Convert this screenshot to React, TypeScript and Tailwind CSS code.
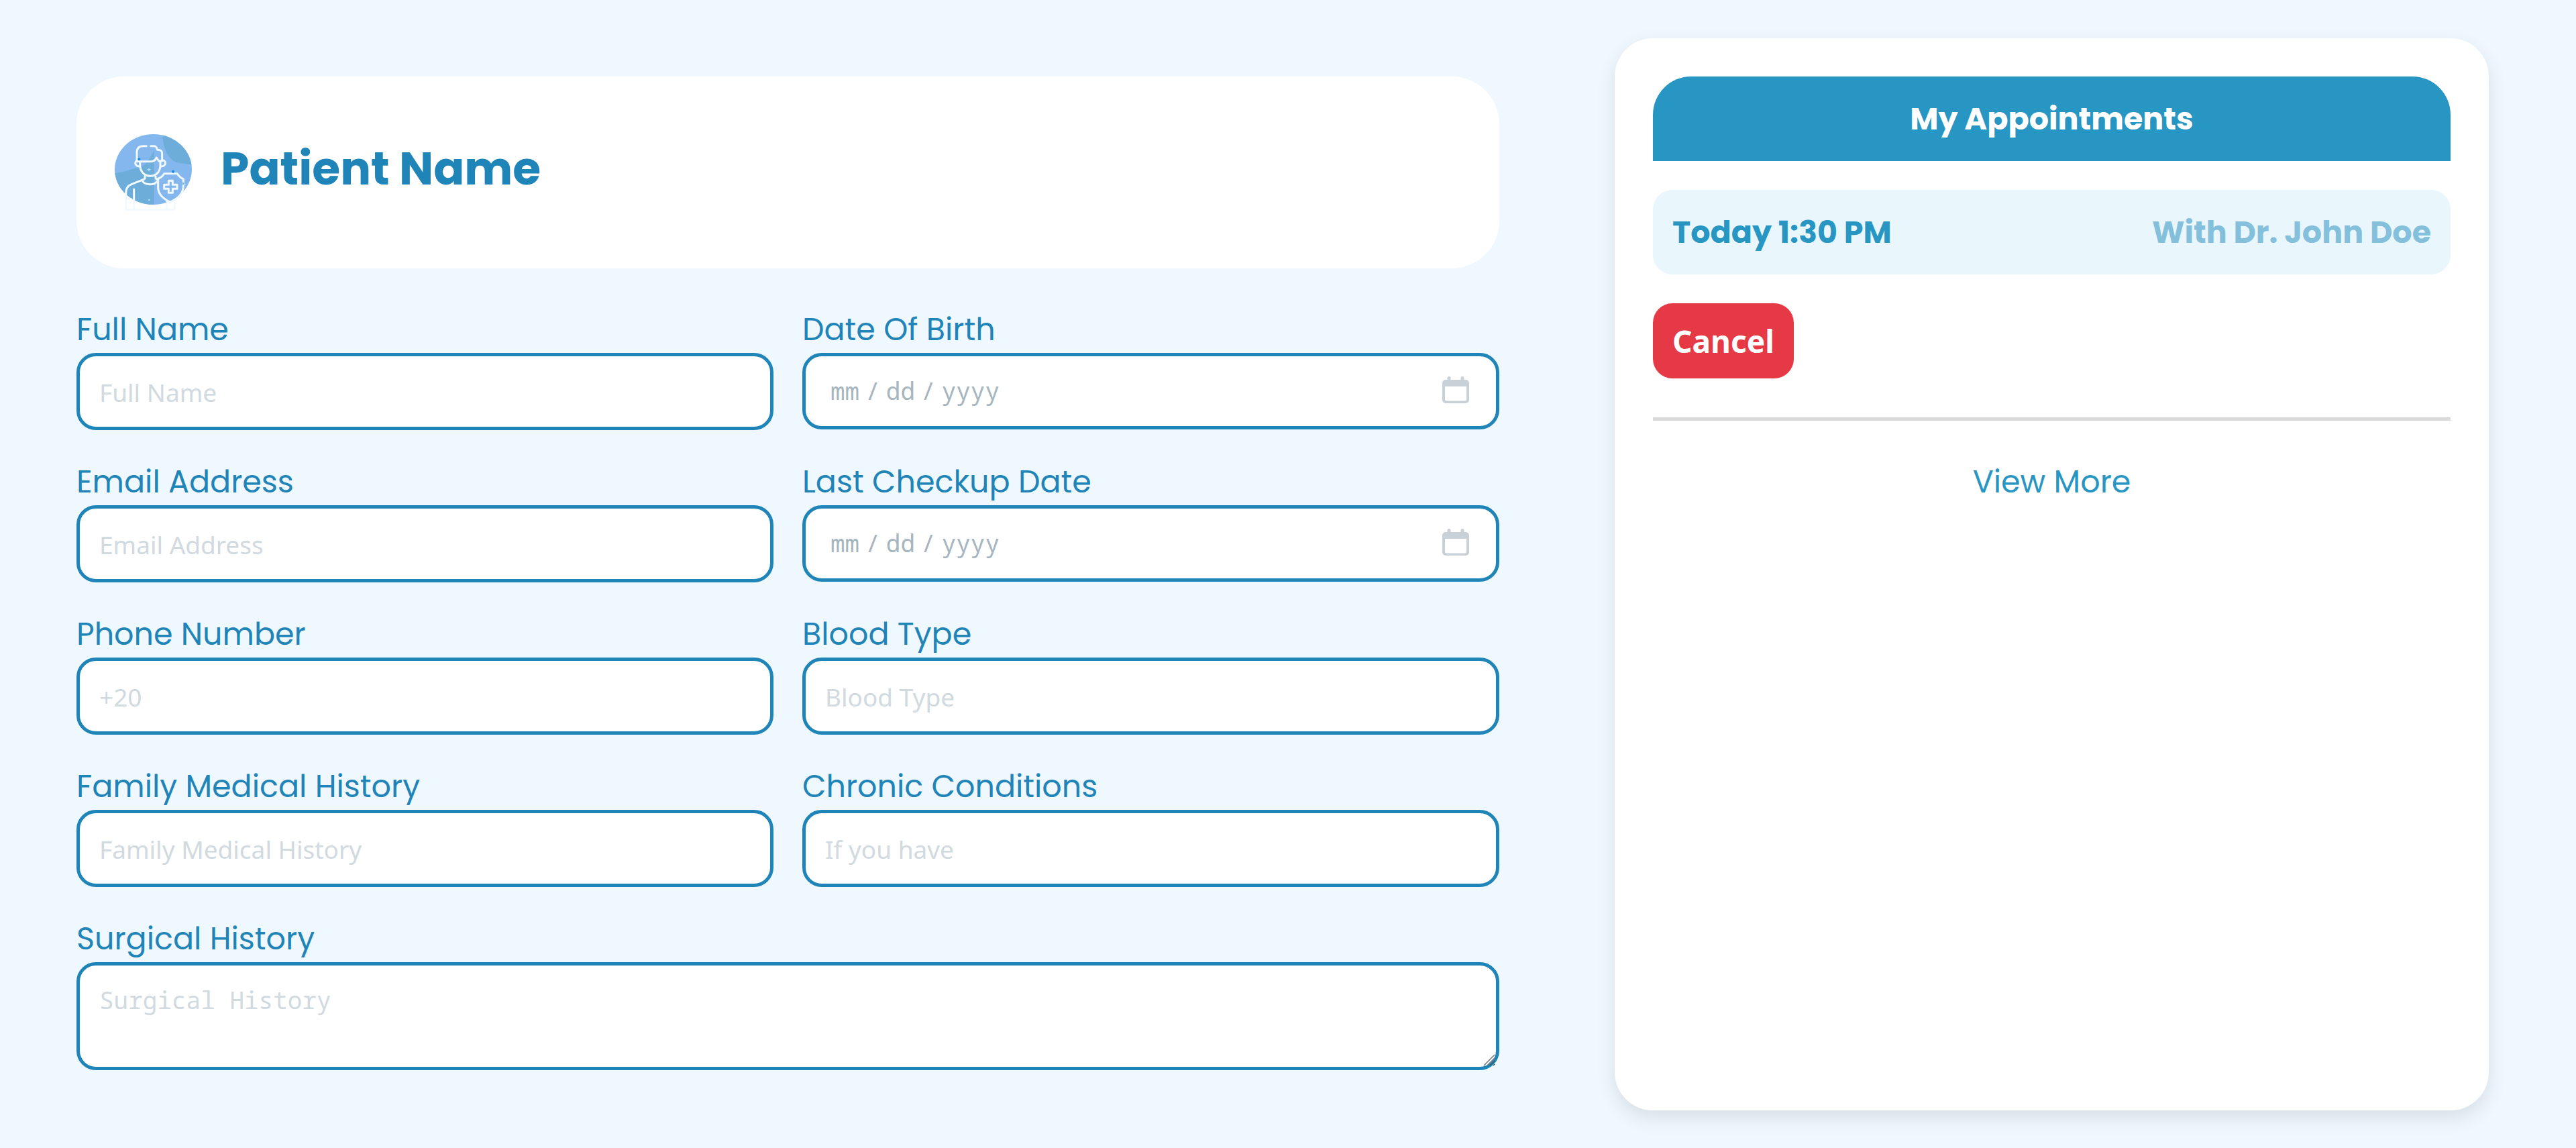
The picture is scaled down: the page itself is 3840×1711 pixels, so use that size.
import type { ReactNode } from "react";

const control =
  "w-full rounded-[29px] border-[5px] border-[#1f84b7] bg-white px-[29px] text-[#1f84b7] outline-none placeholder:text-[#d0dadf] placeholder:opacity-100";
const textControl = "h-[115px] pt-[2px] font-['Noto_Sans',sans-serif] text-[37px]";
const monoControl = "font-['Noto_Sans_Mono','DejaVu_Sans_Mono',monospace] text-[36px]";

function PatientIcon() {
  return (
    <svg viewBox="93 60 345 342" className="h-[114px] w-[115px] shrink-0" role="img" aria-label="Patient">
      <defs>
        <clipPath id="disc">
          <ellipse cx="265.500" cy="217.500" rx="172.500" ry="157.500" />
        </clipPath>
      </defs>
      <g clipPath="url(#disc)">
        <rect x="93" y="60" width="345" height="316" fill="#83b7ed" />
        <path d="M306 60C312 140 342 188 388 190Q415 192 438 197V60Z" fill="#6cadda" />
        <path d="M93 235Q120 231 145 224C175 214 205 212 228 196Q252 168 269 132V376H93Z" fill="#6cadda" />
      </g>
      <g fill="none" stroke="#f0f9ff" strokeWidth="9" strokeLinecap="round" strokeLinejoin="round">
        <path d="M192 180V142Q192 113 220 113H235" />
        <path d="M254 113H270Q280 114 284 130Q304 130 305 144V180H290L280 165Q272 182 256 182H196" />
        <path d="M206 183V200C208 234 232 247 252 247S296 234 297 200V183" />
        <path d="M203 178C179 172 179 206 205 204" />
        <path d="M302 178C326 172 326 206 299 204" />
        <path d="M228 248V258Q226 262 215 265C224 290 272 290 283 270" />
        <path d="M276 248V256Q278 262 288 262" />
        <path d="M215 265L168 284Q143 294 143 322V352" />
        <path d="M179 306V372" />
        <path d="M400 272V260Q386 256 372 236H314Q304 254 287 258V300C288 330 312 350 342 364C372 350 400 330 400 291" />
        <path d="M334 268H352V286H372V304H352V322H334V304H314V286H334Z" />
      </g>
      <g fill="none" stroke="#f0f9ff" strokeWidth="7" strokeLinejoin="round">
        <path d="M143 350V392Q143 398 150 398H354Q361 398 361 391V362M179 372V398M326 360V398M143 350H170" />
      </g>
      <g stroke="#b5dcf6" strokeWidth="4">
        <path d="M246 210V226M238 218H254M247 350V358M243 354H251M404 276V292M396 284H412" />
      </g>
      <path d="M202 166V178M196 172H208M354 221V233M348 227H360" stroke="#1590ea" strokeWidth="7" />
    </svg>
  );
}

function CalendarIcon() {
  return (
    <svg viewBox="0 0 40 40" className="h-10 w-10" aria-hidden="true">
      <path
        fill="#c8d1d7"
        fillRule="evenodd"
        d="M10 0a2.500 2.500 0 0 1 2.500 2.500V5h15V2.500a2.500 2.500 0 0 1 5 0V5H35a5 5 0 0 1 5 5v25a5 5 0 0 1-5 5H5a5 5 0 0 1-5-5V10a5 5 0 0 1 5-5h2.500V2.500A2.500 2.500 0 0 1 10 0ZM4 15v19a2.500 2.500 0 0 0 2.500 2.500h27A2.500 2.500 0 0 0 36 34V15Z"
      />
    </svg>
  );
}

function ResizeGrip() {
  return (
    <svg
      viewBox="0 0 18 18"
      className="pointer-events-none absolute right-[6px] bottom-[6px] size-[18px]"
      aria-hidden="true"
      fill="none"
      strokeWidth="1.500"
    >
      <path d="M1 17L17 1M6 17L17 6" stroke="#6f7579" />
      <path d="M10 17L17 10M15 17L17 15" stroke="#3d5b6b" />
    </svg>
  );
}

function Field({ id, label, wide, children }: { id: string; label: string; wide?: boolean; children: ReactNode }) {
  return (
    <div className={wide ? "col-span-2 flex flex-col" : "flex flex-col"}>
      <label htmlFor={id} className="text-[46px] leading-[69px] text-[#1f84b7]">
        {label}
      </label>
      {children}
    </div>
  );
}

function TextField({ id, label, placeholder, type = "text" }: { id: string; label: string; placeholder: string; type?: string }) {
  return (
    <Field id={id} label={label}>
      <input id={id} name={id} type={type} placeholder={placeholder} className={`${control} ${textControl}`} />
    </Field>
  );
}

function DateField({ id, label }: { id: string; label: string }) {
  return (
    <Field id={id} label={label}>
      <div className="relative">
        <input
          id={id}
          name={id}
          type="date"
          className={`${control} ${monoControl} block h-[114px] pl-[36px] text-[#a6b6bf] [&::-webkit-calendar-picker-indicator]:opacity-0 [&::-webkit-datetime-edit-text]:px-2`}
        />
        <span className="pointer-events-none absolute inset-y-0 right-[45px] flex items-center pb-1">
          <CalendarIcon />
        </span>
      </div>
    </Field>
  );
}

export default function App() {
  return (
    <main className="grid min-h-screen grid-cols-[2121fr_1303fr] gap-[172px] bg-[#eff8ff] pt-[57px] pr-[130px] pb-[56px] pl-[114px] font-[Poppins,sans-serif]">
      <section className="pt-[57px]">
        <header className="flex items-start gap-[43px] rounded-[71px] bg-white px-[57px] py-[86px]">
          <PatientIcon />
          <h1 className="text-[68px] leading-[103px] font-bold text-[#1f84b7]">Patient Name</h1>
        </header>
        <form className="mt-[57px] grid grid-cols-2 gap-x-[43px] gap-y-[43px]">
          <TextField id="fullName" label="Full Name" placeholder="Full Name" />
          <DateField id="birthDate" label="Date Of Birth" />
          <TextField id="email" label="Email Address" placeholder="Email Address" type="email" />
          <DateField id="lastCheckup" label="Last Checkup Date" />
          <TextField id="phone" label="Phone Number" placeholder="+20" type="tel" />
          <TextField id="bloodType" label="Blood Type" placeholder="Blood Type" />
          <TextField id="familyHistory" label="Family Medical History" placeholder="Family Medical History" />
          <TextField id="chronic" label="Chronic Conditions" placeholder="If you have" />
          <Field id="surgical" label="Surgical History" wide>
            <div className="relative">
              <textarea
                id="surgical"
                name="surgical"
                placeholder="Surgical History"
                className={`${control} ${monoControl} block h-[161px] resize-none py-[29px] leading-[46px]`}
              />
              <ResizeGrip />
            </div>
          </Field>
        </form>
      </section>

      <aside className="flex flex-col rounded-[57px] bg-white p-[57px] shadow-[0_11px_29px_rgba(0,0,0,0.1)]">
        <h2 className="rounded-t-[57px] bg-[#2896c3] p-[29px] text-center text-[46px] leading-[68px] font-bold text-white">
          My Appointments
        </h2>
        <div className="mt-[43px] flex justify-between rounded-[29px] bg-[#e9f6fc] p-[29px] text-[46px] leading-[68px] font-bold">
          <p className="text-[#2896c3]">Today 1:30 PM</p>
          <p className="text-[#84c0db]">With Dr. John Doe</p>
        </div>
        <button
          type="button"
          className="mt-[43px] h-[112px] self-start rounded-[29px] bg-[#e63946] px-[29px] font-['Noto_Sans',sans-serif] text-[46px] font-bold text-white"
        >
          Cancel
        </button>
        <hr className="mt-[58px] border-t-[5px] border-[#d9d9d9]" />
        <a href="#appointments" className="mt-[57px] self-center text-[46px] leading-[69px] text-[#2896c3]">
          View More
        </a>
      </aside>
    </main>
  );
}
